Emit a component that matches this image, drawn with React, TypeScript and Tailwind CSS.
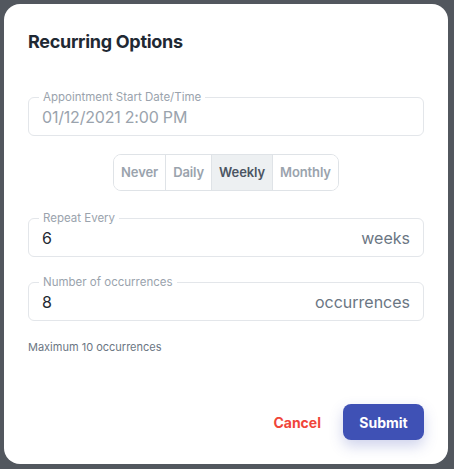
import React from "react";

const font = { fontFamily: "Inter, 'Noto Sans', 'Liberation Sans', sans-serif" };

function OutlinedField({
  label,
  value,
  suffix,
  disabled,
}: {
  label: string;
  value: string;
  suffix?: string;
  disabled?: boolean;
}) {
  return (
    <div className="relative flex h-[39px] items-center justify-between rounded-md border border-[#e3e6ea] px-[13px]">
      <span className="absolute -top-[8px] left-[10px] bg-white px-[4px] text-[11.5px] leading-[14px] text-[#9aa3ad]">
        {label}
      </span>
      <span
        className={
          disabled
            ? "text-[16px] tracking-[-0.2px] text-[#9aa3ad]"
            : "text-[16px] text-[#1f2933]"
        }
      >
        {value}
      </span>
      {suffix && <span className="text-[16px] text-[#6b7683]">{suffix}</span>}
    </div>
  );
}

export default function App() {
  const options = ["Never", "Daily", "Weekly", "Monthly"];
  const selected = "Weekly";

  return (
    <div className="flex h-[469px] w-[454px] bg-[#52575e] p-[4px]" style={font}>
      <div className="flex h-[460px] w-[444px] flex-col rounded-2xl bg-white px-6 pt-6 pb-6">
        <h2 className="text-[18px] font-bold leading-7 tracking-[-0.3px] text-[#1f2933]">
          Recurring Options
        </h2>

        <div className="mt-[41px]">
          <OutlinedField label="Appointment Start Date/Time" value="01/12/2021 2:00 PM" disabled />
        </div>

        <div className="mt-[18px] flex justify-center">
          <div className="flex h-[37px] overflow-hidden rounded-lg border border-[#dfe3e7]">
            {options.map((o, i) => (
              <button
                key={o}
                type="button"
                className={[
                  "px-[7px] text-[13px] font-semibold tracking-[-0.1px]",
                  i > 0 ? "border-l border-[#dfe3e7]" : "",
                  o === selected ? "bg-[#edf0f2] text-[#4b5563]" : "bg-white text-[#9aa3ad]",
                ].join(" ")}
              >
                {o}
              </button>
            ))}
          </div>
        </div>

        <div className="mt-[27px]">
          <OutlinedField label="Repeat Every" value="6" suffix="weeks" />
        </div>

        <div className="mt-[25px]">
          <OutlinedField label="Number of occurrences" value="8" suffix="occurrences" />
        </div>

        <p className="mt-[19px] text-[11px] leading-[14px] text-[#6b7683]">Maximum 10 occurrences</p>

        <div className="mt-auto flex items-center justify-end gap-[22px]">
          <button type="button" className="text-[14px] font-bold text-[#f0453a]">
            Cancel
          </button>
          <button
            type="button"
            className="h-[36px] w-[81px] rounded-lg bg-[#3f51b5] text-[14px] font-bold text-white shadow-[0_6px_14px_rgba(63,81,181,0.25)]"
          >
            Submit
          </button>
        </div>
      </div>
    </div>
  );
}
